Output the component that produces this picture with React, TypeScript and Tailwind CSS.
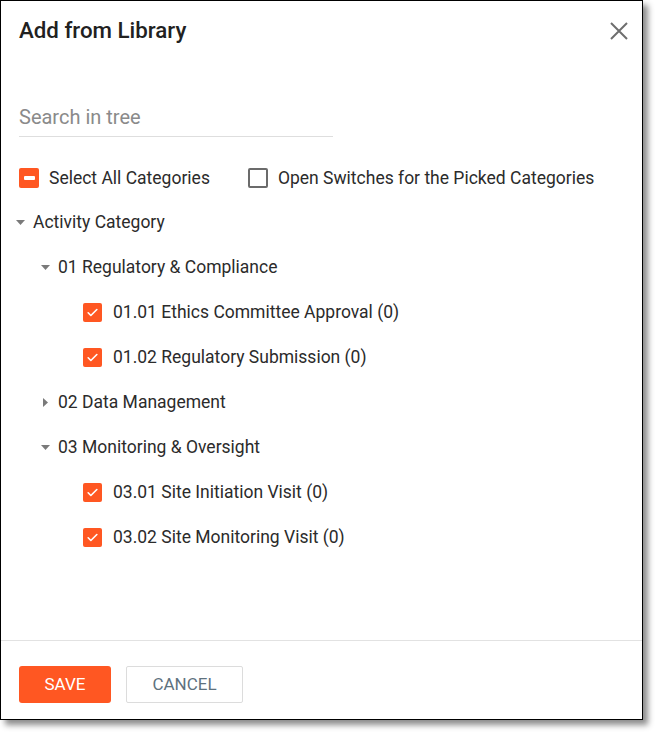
import React from 'react';

const ORANGE = '#ff5722';

function CheckedBox() {
  return (
    <span className="flex h-[19px] w-[19px] shrink-0 items-center justify-center rounded-[2px] bg-[#ff5722]">
      <svg width="13" height="13" viewBox="0 0 24 24" fill="none" stroke="white" strokeWidth="3" strokeLinecap="round" strokeLinejoin="round">
        <path d="M4 12.5l5 5L20 6.5" />
      </svg>
    </span>
  );
}

function IndeterminateBox() {
  return (
    <span className="flex h-[20px] w-[20px] shrink-0 items-center justify-center rounded-[2px] bg-[#ff5722]">
      <span className="h-[4px] w-[11px] rounded-[1px] bg-white" />
    </span>
  );
}

function EmptyBox() {
  return <span className="block h-[20px] w-[20px] shrink-0 rounded-[2px] border-2 border-[#6b6b6b] bg-white" />;
}

function Caret({ open }: { open: boolean }) {
  return open ? (
    <svg width="9" height="5" viewBox="0 0 9 5" className="shrink-0">
      <path d="M0 0h9L4.5 5z" fill="#7a7a7a" />
    </svg>
  ) : (
    <svg width="5" height="9" viewBox="0 0 5 9" className="shrink-0">
      <path d="M0 0v9l5-4.5z" fill="#7a7a7a" />
    </svg>
  );
}

type Row =
  | { kind: 'group'; level: number; label: string; open: boolean }
  | { kind: 'leaf'; label: string };

const rows: Row[] = [
  { kind: 'group', level: 0, label: 'Activity Category', open: true },
  { kind: 'group', level: 1, label: '01 Regulatory & Compliance', open: true },
  { kind: 'leaf', label: '01.01 Ethics Committee Approval (0)' },
  { kind: 'leaf', label: '01.02 Regulatory Submission (0)' },
  { kind: 'group', level: 1, label: '02 Data Management', open: false },
  { kind: 'group', level: 1, label: '03 Monitoring & Oversight', open: true },
  { kind: 'leaf', label: '03.01 Site Initiation Visit (0)' },
  { kind: 'leaf', label: '03.02 Site Monitoring Visit (0)' },
];

export default function App() {
  return (
    <div className="h-[732px] w-[655px] bg-white" style={{ fontFamily: 'Roboto, "Liberation Sans", sans-serif' }}>
      <div className="flex h-[720px] w-[643px] flex-col border border-black bg-white shadow-[5px_5px_6px_rgba(0,0,0,0.45)]">
        {/* header */}
        <div className="flex h-[59px] shrink-0 items-center justify-between pl-[18px] pr-[14px]">
          <h2 className="text-[22.3px] font-medium text-[#212121]">Add from Library</h2>
          <svg width="18" height="18" viewBox="0 0 18 18" className="mt-[1px]">
            <path d="M1 1l16 16M17 1L1 17" stroke="#6e6e6e" strokeWidth="2" />
          </svg>
        </div>

        <div className="flex flex-1 flex-col">
          {/* search */}
          <div className="pl-[18px] pt-[37px]">
            <input
              placeholder="Search in tree"
              className="h-[40px] w-[314px] border-b border-[#dedede] bg-transparent text-[20px] text-[#333] outline-none placeholder:text-[#8a8a8a]"
            />
          </div>

          {/* options */}
          <div className="mt-[21px] flex h-[40px] items-center pl-[18px] text-[17.5px] text-[#2b2b2b]">
            <IndeterminateBox />
            <span className="ml-[10px]">Select All Categories</span>
            <span className="ml-[38px]">
              <EmptyBox />
            </span>
            <span className="ml-[10px]">Open Switches for the Picked Categories</span>
          </div>

          {/* tree */}
          <div className="mt-[2px] flex flex-col text-[17.5px] text-[#2b2b2b]">
            {rows.map((r, i) =>
              r.kind === 'group' ? (
                <div
                  key={i}
                  className={`flex h-[45px] items-center ${r.level === 0 ? 'pl-[15px]' : 'pl-[40px]'}`}
                >
                  <span className="flex w-[17px] justify-start">
                    {r.open ? <Caret open /> : <span className="pl-[2px]"><Caret open={false} /></span>}
                  </span>
                  <span>{r.label}</span>
                </div>
              ) : (
                <div key={i} className="flex h-[45px] items-center pl-[82px]">
                  <CheckedBox />
                  <span className="ml-[11px]">{r.label}</span>
                </div>
              )
            )}
          </div>
        </div>

        {/* footer */}
        <div className="flex h-[79px] shrink-0 gap-[15px] border-t border-[#e2e2e2] pl-[18px] pt-[25px]">
          <button
            className="h-[37px] w-[92px] rounded-[3px] text-[17px] uppercase text-white"
            style={{ backgroundColor: ORANGE }}
          >
            Save
          </button>
          <button className="h-[37px] w-[117px] rounded-[2px] border border-[#dcdcdc] bg-white text-[17px] uppercase text-[#5e717e]">
            Cancel
          </button>
        </div>
      </div>
    </div>
  );
}
